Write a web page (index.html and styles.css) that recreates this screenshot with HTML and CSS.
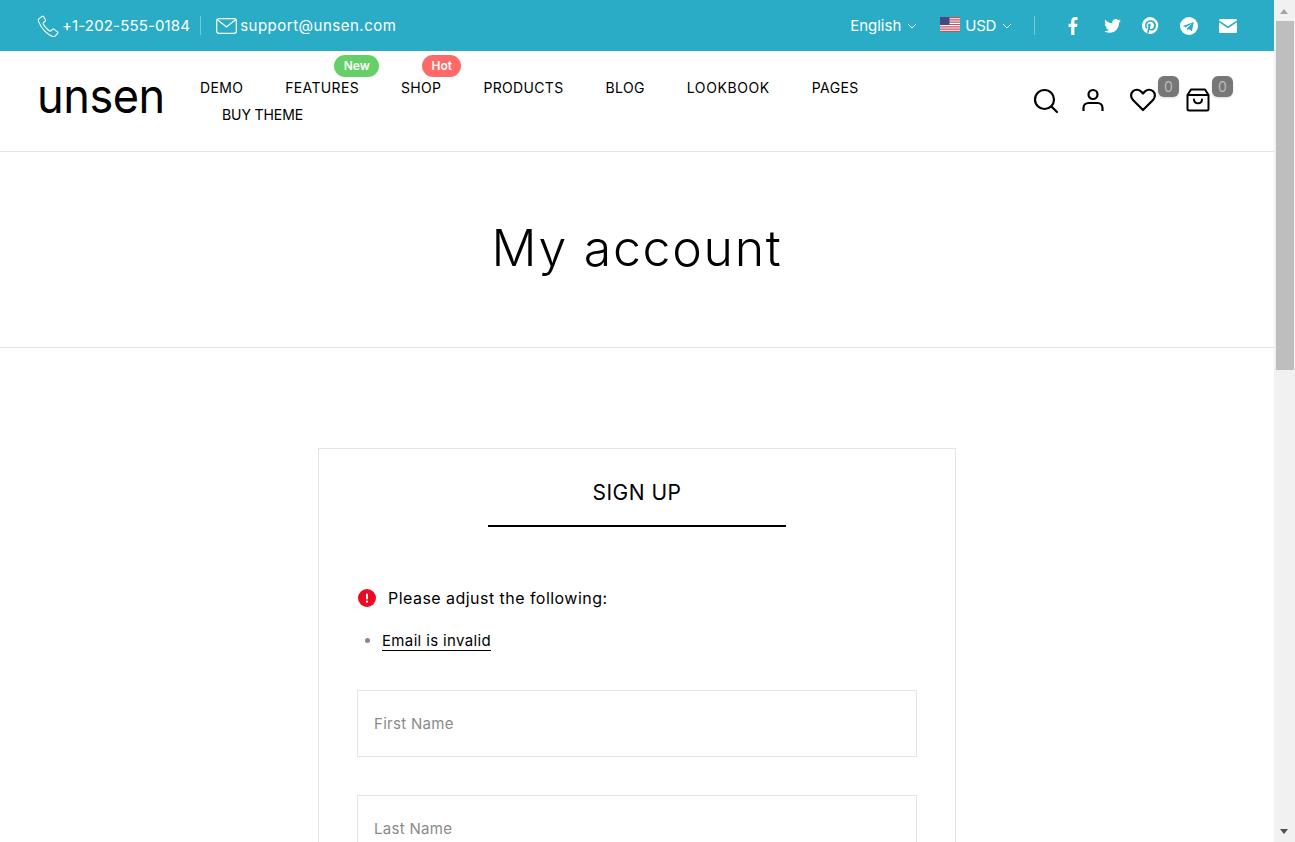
FILE: index.html
```html
<!DOCTYPE html>
<html lang="en">
<head>
  <meta charset="UTF-8" />
  <title>My account - Unsen</title>
  <link rel="stylesheet" href="styles.css">
</head>
<body>
  <div class="window">
    <div class="page">
      <div class="topbar">
        <div class="contact">
          <a class="contact-item contact-phone">
            <svg width="22" height="22" viewBox="0 0 24 24" fill="none" stroke="#fff" stroke-width="1.2" stroke-linejoin="round"><path d="M5.5 1.5 2 4.2c-.8.9-.6 2.3.2 4.1 1.500 3.200 3.500 6.400 6.300 9.400 2.600 2.700 5.300 4.800 8.200 5.600 1.400.4 2.500.2 3.300-.6l2.500-2.700c.4-.5.3-1.200-.2-1.600l-3.900-3c-.5-.3-1-.3-1.400.1l-1.700 1.800c-.4.4-1 .4-1.500.1-1.400-.9-2.700-2-3.900-3.300-1.300-1.300-2.300-2.800-3.100-4.300-.2-.5-.2-1 .2-1.400l1.900-1.600c.4-.4.5-1 .2-1.500L7.200 1.700c-.4-.5-1.200-.6-1.700-.2Z"/></svg>
            +1-202-555-0184
          </a>
          <span class="divider"></span>
          <a class="contact-item contact-mail">
            <svg width="21" height="16" viewBox="0 0 21 16" fill="none" stroke="#fff" stroke-width="1.200"><rect x=".7" y=".7" width="19.600" height="14.600" rx="2"/><path d="m1.500 1.800 9 7.200 9-7.200"/></svg>
            support@unsen.com
          </a>
        </div>
        <div class="top-right">
          <a class="picker">English <svg class="chev" width="10" height="6" viewBox="0 0 10 6" fill="none" stroke="#fff"><path d="m1 1 4 4 4-4"/></svg></a>
          <a class="picker picker-currency">
            <svg class="flag" width="20" height="15" viewBox="0 0 20 15">
              <rect width="20" height="15" fill="#fff"/>
              <path d="M0 0h20v1.200H0zM0 2.300h20v1.200H0zM0 4.600h20v1.200H0zM0 6.900h20v1.200H0zM0 9.200h20v1.200H0zM0 11.500h20v1.200H0zM0 13.800h20V15H0z" fill="#c4515f"/>
              <rect width="9.500" height="8.100" fill="#44497f"/>
            </svg>
            USD <svg class="chev" width="10" height="6" viewBox="0 0 10 6" fill="none" stroke="#fff"><path d="m1 1 4 4 4-4"/></svg>
          </a>
          <span class="divider divider-right"></span>
          <div class="socials">
            <svg class="social-fb" width="11" height="18" viewBox="0 0 12 18" fill="#fff" preserveAspectRatio="none"><path d="M3.500 18V10H.6V6.700h2.900V4.300C3.500 1.400 5.200 0 7.800 0c1.200 0 2.300.1 2.600.1v3H8.600C7.200 3.100 7 3.800 7 4.700v2h3.300L9.900 10H7v8Z"/></svg>
            <svg width="17" height="14" viewBox="0 0 24 20" fill="#fff"><path d="M24 2.400c-.9.400-1.800.7-2.800.8 1-.6 1.800-1.600 2.200-2.700-1 .6-2 1-3.100 1.200C19.300.7 18 .1 16.600.1c-2.700 0-4.900 2.200-4.900 4.900 0 .4 0 .8.100 1.100C7.700 5.900 4.100 4 1.700.9c-.4.700-.7 1.600-.7 2.500 0 1.700.9 3.200 2.200 4.100-.8 0-1.600-.2-2.200-.6v.1c0 2.400 1.700 4.400 3.900 4.800-.4.100-.8.200-1.300.2-.3 0-.6 0-.9-.1.600 2 2.400 3.400 4.600 3.400-1.700 1.300-3.800 2.100-6.100 2.100-.4 0-.8 0-1.200-.1C2.200 18.800 4.800 19.600 7.500 19.600c9.100 0 14-7.500 14-14v-.6c1-.7 1.800-1.600 2.500-2.600Z"/></svg>
            <svg width="17" height="17" viewBox="0 0 24 24" fill="#fff"><path d="M12 0a12 12 0 0 0-4.400 23.200c-.1-.9-.2-2.400 0-3.400l1.400-6s-.4-.7-.4-1.800c0-1.700 1-2.900 2.200-2.900 1 0 1.500.8 1.500 1.700 0 1.100-.7 2.600-1 4.100-.3 1.200.6 2.200 1.800 2.200 2.100 0 3.800-2.200 3.800-5.500 0-2.900-2.100-4.900-5-4.900-3.400 0-5.400 2.600-5.400 5.200 0 1 .4 2.100.9 2.700.1.100.1.200.1.300l-.3 1.400c-.1.200-.2.300-.4.200-1.500-.7-2.400-2.900-2.400-4.600 0-3.800 2.700-7.200 7.900-7.200 4.100 0 7.400 3 7.400 6.900 0 4.100-2.600 7.500-6.200 7.500-1.200 0-2.400-.6-2.800-1.400l-.7 2.900c-.3 1-1 2.300-1.500 3.100A12 12 0 1 0 12 0Z"/></svg>
            <svg width="18" height="18" viewBox="0 0 24 24"><circle cx="12" cy="12" r="12" fill="#fff"/><path d="M5 11.700 17.300 7c.6-.2 1.100.1.900 1l-2.100 9.900c-.2.700-.6.900-1.200.5l-3.200-2.400-1.600 1.500c-.2.200-.3.300-.6.300l.2-3.300 6-5.400c.3-.2-.1-.4-.4-.2l-7.400 4.700-3.200-1c-.7-.2-.7-.7.100-1Z" fill="#2aacc6"/></svg>
            <svg width="18" height="14" viewBox="0 0 18 14" fill="#fff"><path d="M1.600 0h14.800c.9 0 1.600.7 1.600 1.400L9 7.300 0 1.400C0 .7.700 0 1.600 0ZM0 3.300v9.100C0 13.300.7 14 1.600 14h14.800c.9 0 1.600-.7 1.600-1.600V3.300L9 9.200Z"/></svg>
          </div>
        </div>
      </div>

      <header class="header">
        <a class="logo">unsen</a>
        <nav class="nav">
          <a class="nav-link">DEMO</a>
          <a class="nav-link">FEATURES<span class="tag tag-new">New</span></a>
          <a class="nav-link">SHOP<span class="tag tag-hot">Hot</span></a>
          <a class="nav-link">PRODUCTS</a>
          <a class="nav-link">BLOG</a>
          <a class="nav-link nav-link-wide">LOOKBOOK</a>
          <a class="nav-link">PAGES</a>
          <a class="nav-link nav-link-wrapped">BUY THEME</a>
        </nav>
        <div class="header-icons">
          <svg width="26" height="26" viewBox="0 0 26 26" fill="none" stroke="#000" stroke-width="2.200" stroke-linecap="round"><circle cx="11.500" cy="11.500" r="9.500"/><path d="m18.500 18.500 5.500 5.500"/></svg>
          <svg class="icon-user" width="22" height="24" viewBox="0 0 22 24" fill="none" stroke="#000" stroke-width="2.200"><circle cx="11" cy="6.500" r="4.500"/><path d="M1.500 23v-3c0-3 2.300-5 5-5h9c2.700 0 5 2 5 5v3"/></svg>
          <div class="count-icon count-heart">
            <svg width="26" height="24" viewBox="0 0 26 24" fill="none" stroke="#000" stroke-width="2.200" stroke-linejoin="round"><path d="M13 22 3 12C.4 9.300.6 5.500 2.900 3.300c2.500-2.300 6.300-2 8.500.4L13 5.500l1.600-1.800c2.200-2.400 6-2.700 8.500-.4 2.300 2.200 2.500 6 -.1 8.700Z"/></svg>
            <span class="count">0</span>
          </div>
          <div class="count-icon count-bag">
            <svg width="24" height="24" viewBox="0 0 24 24" fill="none" stroke="#000" stroke-width="2" stroke-linecap="round" stroke-linejoin="round"><path d="M1.500 7 5 1.500h14L22.500 7v14a1.500 1.500 0 0 1-1.500 1.500H3A1.500 1.500 0 0 1 1.500 21ZM1.500 7h21"/><path d="M8 11.500c.3 5 7.700 5 8 0"/></svg>
            <span class="count">0</span>
          </div>
        </div>
      </header>

      <div class="page-title">
        <h1>My account</h1>
      </div>

      <main class="content">
        <section class="card">
          <h2 class="card-title">SIGN UP</h2>
          <div class="errors">
            <p class="error-head">
              <svg width="18" height="18" viewBox="0 0 18 18"><circle cx="9" cy="9" r="9" fill="#eb0a23"/><rect x="8" y="4.500" width="2" height="6" rx="1" fill="#fff"/><circle cx="9" cy="12.700" r="1.100" fill="#fff"/></svg>
              Please adjust the following:
            </p>
            <ul class="error-list">
              <li><a>Email is invalid</a></li>
            </ul>
          </div>
          <form class="signup">
            <input type="text" placeholder="First Name" />
            <input type="text" placeholder="Last Name" />
          </form>
        </section>
      </main>
    </div>

    <div class="scrollbar">
      <span class="arrow arrow-up"></span>
      <span class="thumb"></span>
      <span class="arrow arrow-down"></span>
    </div>
  </div>
</body>
</html>
```

FILE: styles.css
```css
* {
  box-sizing: border-box;
}

html, body {
  margin: 0;
  height: 842px;
  overflow: hidden;
}

body {
  font-family: 'Inter', 'Liberation Sans', sans-serif;
  color: #000;
  background-color: #fff;
}

.window {
  display: flex;
  height: 842px;
}

.page {
  flex: 1;
  min-width: 0;
  height: 842px;
  overflow: hidden;
}

/* top bar */
.topbar {
  display: flex;
  justify-content: space-between;
  align-items: center;
  height: 51px;
  padding: 0 37px;
  background-color: #2aacc6;
  color: #fff;
  font-size: 15px;
}

.contact, .top-right, .socials, .picker, .contact-item {
  display: flex;
  align-items: center;
}

.contact-item {
  gap: 3px;
}

.contact-phone {
  letter-spacing: 0.15px;
}

.contact-mail {
  letter-spacing: 0.5px;
}

.divider {
  width: 1px;
  height: 19px;
  margin: 0 15px 0 10px;
  background-color: rgba(255, 255, 255, 0.35);
}

.picker {
  gap: 6px;
}

.picker-currency {
  margin-left: 23px;
  letter-spacing: -0.3px;
}

.flag {
  margin: -2px -1px 0 0;
}

.divider-right {
  margin: 0 33px 0 22px;
}

.socials {
  gap: 21px;
}

.social-fb {
  margin-right: 4px;
}

/* header */
.header {
  display: flex;
  height: 101px;
  padding: 0 64px 0 37px;
  border-bottom: 1px solid #e5e5e5;
}

.logo {
  width: 163px;
  margin-top: 20px;
  font-size: 47px;
  font-weight: 400;
  line-height: 50px;
  letter-spacing: -0.5px;
  transform: scaleX(0.96);
  transform-origin: left;
}

.nav {
  display: flex;
  flex-wrap: wrap;
  align-content: flex-start;
  width: 703px;
  padding-top: 23px;
  column-gap: 42px;
}

.nav-link {
  position: relative;
  font-size: 14px;
  letter-spacing: 0.34px;
  line-height: 27px;
  white-space: nowrap;
}

.nav-link-wide {
  letter-spacing: 0.6px;
}

.nav-link-wrapped {
  margin-left: 22px;
  letter-spacing: -0.1px;
}

.tag {
  position: absolute;
  top: -19px;
  padding: 0 9.500px;
  border-radius: 11px;
  color: #fff;
  font-size: 12px;
  font-weight: 600;
  letter-spacing: 0;
  line-height: 22px;
}

.tag-new {
  left: 49px;
  background-color: #65d068;
}

.tag-hot {
  left: 21px;
  background-color: #fe6a6a;
}

.header-icons {
  display: flex;
  align-items: flex-start;
  margin-left: auto;
  padding-top: 37px;
}

.icon-user {
  margin-left: 23px;
}

.count-icon {
  position: relative;
}

.count-heart {
  margin-left: 26px;
}

.count-bag {
  margin-left: 30px;
}

.count {
  position: absolute;
  top: -12px;
  left: 28px;
  width: 21px;
  height: 21px;
  border-radius: 6px;
  background-color: #777;
  box-shadow: 0 1px 2px rgba(0, 0, 0, 0.15);
  color: #bbb;
  font-size: 14px;
  line-height: 21px;
  text-align: center;
}

.count-bag .count {
  left: 26px;
}

/* title */
.page-title {
  height: 196px;
  padding-top: 64px;
  border-bottom: 1px solid #e5e5e5;
  text-align: center;
}

.page-title h1 {
  margin: 0;
  font-size: 50px;
  font-weight: 300;
  letter-spacing: 1.7px;
  line-height: 64px;
}

/* form card */
.content {
  padding-top: 100px;
}

.card {
  width: 638px;
  margin: 0 auto;
  padding: 0 38px;
  border: 1px solid #e5e5e5;
}

.card-title {
  width: 298px;
  height: 78px;
  margin: 0 auto 58px;
  padding-top: 29px;
  border-bottom: 2px solid #000;
  font-size: 21px;
  font-weight: 400;
  letter-spacing: 0.5px;
  line-height: 30px;
  text-align: center;
}

.errors {
  font-size: 16px;
  letter-spacing: 0.46px;
}

.error-head {
  display: flex;
  align-items: center;
  gap: 12px;
  margin: 0;
  line-height: 26px;
}

.error-head svg {
  margin-left: 1px;
}

.error-list {
  margin: 19px 0 0;
  padding: 0 0 0 25px;
  color: #888;
  font-size: 15px;
  letter-spacing: 0.35px;
  line-height: 22px;
}

.error-list a {
  display: inline-block;
  color: #000;
  border-bottom: 1px solid #000;
  line-height: 18px;
}

.signup {
  display: flex;
  flex-direction: column;
  gap: 38px;
  padding-top: 38px;
}

.signup input {
  width: 560px;
  height: 67px;
  padding: 0 16px;
  border: 1px solid #e5e5e5;
  outline: none;
  font-family: inherit;
  font-size: 15px;
  letter-spacing: 0.3px;
}

.signup input::placeholder {
  color: #8a8a8a;
}

/* window scrollbar */
.scrollbar {
  position: relative;
  width: 21px;
  height: 842px;
  background-color: #f1f1f1;
}

.thumb {
  position: absolute;
  top: 21px;
  left: 2px;
  width: 18px;
  height: 349px;
  background-color: #bebebe;
}

.arrow {
  position: absolute;
  left: 6px;
  width: 0;
  height: 0;
  border-left: 4.500px solid transparent;
  border-right: 4.500px solid transparent;
}

.arrow-up {
  top: 9px;
  border-bottom: 5px solid #a3a3a3;
}

.arrow-down {
  bottom: 8px;
  border-top: 5px solid #505050;
}
```
